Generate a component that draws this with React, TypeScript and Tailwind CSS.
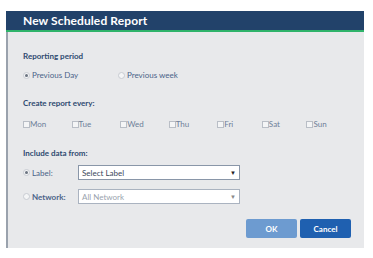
import React from "react";

const days = ["Mon", "Tue", "Wed", "Thu", "Fri", "Sat", "Sun"];

function Radio({ checked }: { checked?: boolean }) {
  return (
    <span className="w-[7px] h-[7px] rounded-full bg-[#f4f5f6] border border-[#c8ccd2] flex items-center justify-center">
      {checked && <span className="w-[3px] h-[3px] rounded-full bg-[#6b7480]" />}
    </span>
  );
}

function Box() {
  return <span className="w-[7px] h-[7px] bg-[#f4f5f6] border border-[#b9bec6]" />;
}

export default function App() {
  return (
    <div className="w-[373px] h-[258px] bg-white pt-[11px] pl-[6px] font-['Lato','Noto_Sans',sans-serif]">
      <div className="w-[358px] flex flex-col">
        <div className="h-[19px] bg-[#22426a] flex items-center pl-[17px] text-white text-[12px] font-bold tracking-[0.1px]">
          New Scheduled Report
        </div>
        <div className="h-[2px] bg-[#2fb36a]" />
        <div className="h-[216px] bg-[#e8e9eb] border-l-2 border-[#9aa2ad] pl-[15px] pr-[13px] flex flex-col text-[#3b5478] text-[8px]">
          <div className="mt-[19px] font-bold text-[#2e4a70] h-[10px] leading-[10px]">Reporting period</div>
          <div className="mt-[9px] flex items-center h-[10px]">
            <div className="flex items-center gap-[2px] w-[95px]">
              <Radio checked />
              <span className="text-[#4a6388]">Previous Day</span>
            </div>
            <div className="flex items-center gap-[2px]">
              <Radio />
              <span className="text-[#4a6388]">Previous week</span>
            </div>
          </div>
          <div className="mt-[18px] font-bold text-[#2e4a70] h-[10px] leading-[10px]">Create report every:</div>
          <div className="mt-[11px] flex items-center h-[10px]">
            {days.map((d, i) => (
              <div key={d} className={`flex items-center ${i < 4 ? "w-[49px]" : "w-[45px]"}`}>
                <Box />
                <span className="text-[#6d7f99]">{d}</span>
              </div>
            ))}
          </div>
          <div className="mt-[19px] font-bold text-[#2e4a70] h-[10px] leading-[10px]">Include data from:</div>
          <div className="mt-[7px] flex items-center h-[15px]">
            <div className="flex items-center gap-[2px] w-[55px]">
              <Radio checked />
              <span className="text-[#4a6388]">Label:</span>
            </div>
            <div className="w-[162px] h-[15px] bg-white border border-[#8996a8] flex items-center justify-between px-[3px]">
              <span className="text-[#39475a]">Select Label</span>
              <span className="text-[6px] text-[#222]">▼</span>
            </div>
          </div>
          <div className="mt-[9px] flex items-center h-[15px]">
            <div className="flex items-center gap-[2px] w-[55px]">
              <Radio />
              <span className="text-[#4a6388] font-bold">Network:</span>
            </div>
            <div className="w-[162px] h-[15px] bg-white border border-[#aab3c0] flex items-center justify-between px-[3px]">
              <span className="text-[#9aa3ae]">All Network</span>
              <span className="text-[6px] text-[#888]">▼</span>
            </div>
          </div>
          <div className="mt-[15px] flex justify-end gap-[3px] pr-0">
            <div className="w-[51px] h-[19px] rounded-[2px] bg-[#6d9bd0] text-white text-[8px] font-bold flex items-center justify-center">OK</div>
            <div className="w-[51px] h-[19px] rounded-[2px] bg-[#1f60b0] text-white text-[8px] font-bold flex items-center justify-center">Cancel</div>
          </div>
        </div>
      </div>
    </div>
  );
}
